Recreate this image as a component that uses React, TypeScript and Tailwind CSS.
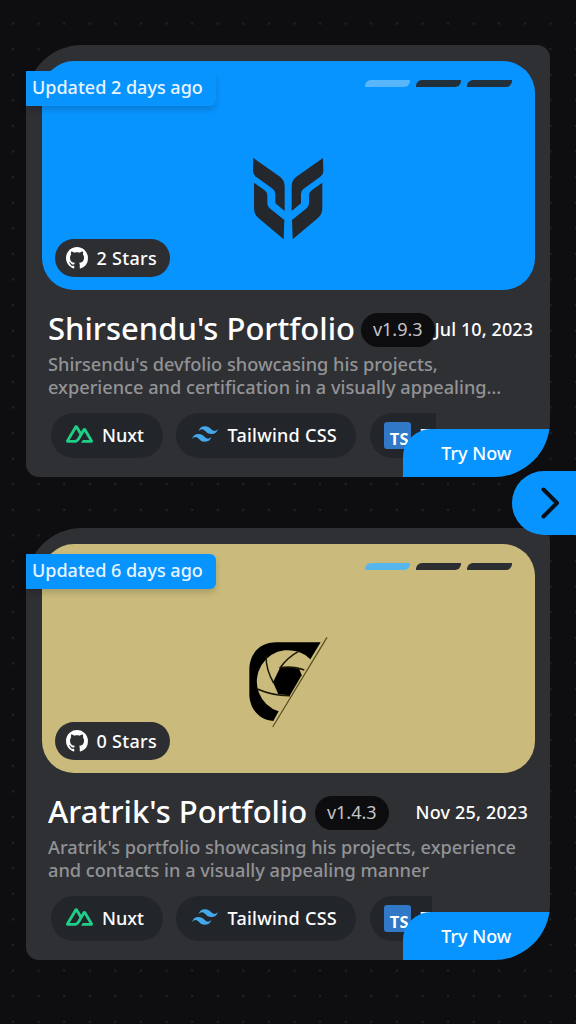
import React from "react";

function GithubIcon() {
  return (
    <svg viewBox="0 0 16 16" className="h-[22px] w-[22px] shrink-0" fill="#fff">
      <path d="M8 0C3.58 0 0 3.58 0 8c0 3.54 2.29 6.53 5.47 7.59.4.07.55-.17.55-.38 0-.19-.01-.82-.01-1.49-2.01.37-2.53-.49-2.69-.94-.09-.23-.48-.94-.82-1.13-.28-.15-.68-.52-.01-.53.63-.01 1.08.58 1.23.82.72 1.21 1.87.87 2.33.66.07-.52.28-.87.51-1.07-1.78-.2-3.64-.89-3.64-3.95 0-.87.31-1.59.82-2.15-.08-.2-.36-1.02.08-2.12 0 0 .67-.21 2.2.82.64-.18 1.32-.27 2-.27s1.36.09 2 .27c1.53-1.04 2.2-.82 2.2-.82.44 1.1.16 1.92.08 2.12.51.56.82 1.27.82 2.15 0 3.07-1.87 3.75-3.65 3.95.29.25.54.73.54 1.48 0 1.07-.01 1.93-.01 2.2 0 .21.15.46.55.38A8.01 8.01 0 0 0 16 8c0-4.42-3.58-8-8-8z" />
    </svg>
  );
}

function NuxtIcon() {
  return (
    <svg viewBox="0 4.1 24 15.8" className="-mt-[3px] h-[18px] w-[27px] shrink-0" fill="#1fcf88">
      <path d="M13.4642 19.8295h8.9218c.2834 0 .5618-.0723.8072-.2098a1.5899 1.5899 0 0 0 .5908-.5732 1.5293 1.5293 0 0 0 .216-.783 1.529 1.529 0 0 0-.2167-.7828L17.7916 7.4142a1.59 1.59 0 0 0-.5907-.573 1.6524 1.6524 0 0 0-.807-.2098c-.2833 0-.5616.0724-.807.2098a1.5904 1.5904 0 0 0-.5907.573L13.4642 9.99l-2.9954-5.0366a1.5913 1.5913 0 0 0-.591-.573 1.6533 1.6533 0 0 0-.8071-.2098c-.2834 0-.5617.0723-.8072.2097a1.5913 1.5913 0 0 0-.591.573L.2168 17.4808A1.5292 1.5292 0 0 0 0 18.2635c-.0001.2749.0744.545.216.783a1.59 1.59 0 0 0 .5908.5732c.2454.1375.5238.2098.8072.2098h5.6003c2.219 0 3.8554-.9454 4.9813-2.7899l2.7337-4.5922L16.3935 9.99l4.3944 7.382h-5.8586zm-6.341-2.4601l-3.9083-.0009 5.8586-9.8421 2.9232 4.921-1.9572 3.2897c-.7478 1.1967-1.5972 1.6323-2.9163 1.6323z" />
    </svg>
  );
}

function TailwindIcon() {
  return (
    <svg viewBox="0 4.8 24 14.4" className="-mt-[3px] h-4 w-[26px] shrink-0" fill="#44a8ec">
      <path d="M12 4.8c-3.2 0-5.2 1.6-6 4.8 1.2-1.6 2.6-2.2 4.2-1.8.913.228 1.565.89 2.288 1.624C13.666 10.618 15.027 12 18 12c3.2 0 5.2-1.6 6-4.8-1.2 1.6-2.6 2.2-4.2 1.8-.913-.228-1.565-.89-2.288-1.624C16.337 6.182 14.976 4.8 12 4.8zM6 12c-3.2 0-5.2 1.6-6 4.8 1.2-1.6 2.6-2.2 4.2-1.8.913.228 1.565.89 2.288 1.624C7.666 17.818 9.027 19.2 12 19.2c3.2 0 5.2-1.6 6-4.8-1.2 1.6-2.6 2.2-4.2 1.8-.913-.228-1.565-.89-2.288-1.624C10.337 13.382 8.976 12 6 12z" />
    </svg>
  );
}

function WingMark() {
  const half = (
    <>
      <path d="M70 54L150 110Q164 121 164 138V213L136 190V162Q136 152 128 146L80 112Q69 104 69 94Z" />
      <path d="M72 128L104 151Q112 157 112 168V188Q112 200 122 207L163 240L161 298L86 235Q72 224 72 205Z" />
    </>
  );
  return (
    <svg viewBox="0 0 360 330" className="-ml-[1px] h-[110px] w-[120px]" fill="#24282d">
      <g>{half}</g>
      <g transform="translate(349 0) scale(-1 1)">{half}</g>
    </svg>
  );
}

function ShutterMark() {
  return (
    <svg viewBox="0 0 360 360" className="-mt-[3px] h-[120px] w-[120px]" fill="none">
      <path fill="#000" d="M272 67H140C85 67 58 105 58 150V225C60 270 90 300 130 303L146 274A94 94 0 1 1 241 118Z" />
      <path fill="#000" d="M150 143Q180 137 208 147L215 166L180 226L145 223L129 187Z" />
      <path stroke="#1c1806" strokeWidth="4.5" d="M108 108Q108 150 131 189M206 94Q172 112 150 144M148 143Q190 136 223 150M82 207Q130 228 180 227" />
      <path stroke="#57491c" strokeWidth="3.5" d="M291 52L128 321" />
    </svg>
  );
}

const tagPill = "flex h-[45px] shrink-0 items-center rounded-full bg-[#22262a]";

type Project = {
  updated: string;
  cover: string;
  bars: string[];
  mark: React.ReactNode;
  stars: string;
  title: string;
  titleClass: string;
  version: string;
  date: string;
  dateClass: string;
  lines: string[];
  tagsClass: string;
};

const projects: Project[] = [
  {
    updated: "Updated 2 days ago",
    cover: "bg-[#0894ff]",
    bars: ["bg-[#58b6fc]", "bg-[#22303c]", "bg-[#22303c]"],
    mark: <WingMark />,
    stars: "2 Stars",
    title: "Shirsendu's Portfolio",
    titleClass: "w-[313px]",
    version: "v1.9.3",
    date: "Jul 10, 2023",
    dateClass: "tracking-[0.1px]",
    lines: [
      "Shirsendu's devfolio showcasing his projects,",
      "experience and certification in a visually appealing…",
    ],
    tagsClass: "w-[385px]",
  },
  {
    updated: "Updated 6 days ago",
    cover: "bg-[#cabb7c]",
    bars: ["bg-[#58b6ee]", "bg-[#2c2e31]", "bg-[#2c2e31]"],
    mark: <ShutterMark />,
    stars: "0 Stars",
    title: "Aratrik's Portfolio",
    titleClass: "w-[267px]",
    version: "v1.4.3",
    date: "Nov 25, 2023",
    dateClass: "ml-[27px] tracking-[0.2px]",
    lines: [
      "Aratrik's portfolio showcasing his projects, experience",
      "and contacts in a visually appealing manner",
    ],
    tagsClass: "w-[381px]",
  },
];

function Card({ p }: { p: Project }) {
  return (
    <article className="relative h-[432px] w-[524px]">
      <div className="relative flex h-full flex-col overflow-hidden rounded-tl-[56px] rounded-tr-[13px] rounded-br-[56px] rounded-bl-[13px] bg-[#2f3034] px-4 pt-4">
        <div className={"relative flex h-[229px] w-[492.5px] shrink-0 justify-center rounded-[32px] " + p.cover}>
          <div className="ml-[4px] pt-[79px]">{p.mark}</div>
          <div className="absolute top-[19px] right-[22.5px] flex gap-[6.4px]">
            {p.bars.map((b, i) => (
              <span key={i} className={"h-[7px] w-[44.8px] rounded-tl-[6px] rounded-br-[6px] " + b} />
            ))}
          </div>
          <div className="absolute bottom-[13px] left-[12.5px] flex h-[38px] w-[115.5px] items-center gap-[9px] rounded-full bg-[#2d2e32] pl-[11px] text-[18px] tracking-[0.3px] text-white">
            <GithubIcon />
            <span>{p.stars}</span>
          </div>
        </div>
        <div className="mt-[22px] ml-[6px] flex h-[35px] w-[500px] shrink-0 items-center whitespace-nowrap text-white">
          <h2 className={"-mt-[3px] shrink-0 text-[31px] leading-[35px] " + p.titleClass}>{p.title}</h2>
          <span className="flex h-[34px] w-[73.5px] shrink-0 items-center justify-center rounded-full bg-[#0d0d10] text-[18px] font-normal text-[#c4c4c6]">{p.version}</span>
          <span className={"-mt-px text-[18px] " + p.dateClass}>{p.date}</span>
        </div>
        <div className="mt-[6px] ml-[6px] h-[45px] shrink-0 text-[18.2px] leading-[22.5px] whitespace-nowrap text-[#929396]">
          {p.lines.map((l) => (
            <p key={l}>{l}</p>
          ))}
        </div>
        <div className={"mt-[15px] ml-[9px] flex h-[45px] shrink-0 gap-[13.5px] overflow-hidden text-[18px] whitespace-nowrap text-white " + p.tagsClass}>
          <div className={tagPill + " w-[111.5px] gap-[9px] pl-[15px]"}>
            <NuxtIcon />
            <span>Nuxt</span>
          </div>
          <div className={tagPill + " w-[180px] gap-[10px] pl-[15.5px]"}>
            <TailwindIcon />
            <span className="tracking-[0.25px]">Tailwind CSS</span>
          </div>
          <div className={tagPill + " w-[160px] gap-[10px] pl-[14px]"}>
            <span className="flex h-[27px] w-[27px] items-end justify-end rounded-[3px] bg-[#3178c6] pr-[2px] font-['Open_Sans',sans-serif] text-[16.5px] leading-[21px] font-bold">TS</span>
            <span>TypeScript</span>
          </div>
        </div>
        <button className="absolute right-0 bottom-0 h-12 w-[147.5px] rounded-tl-[28px] bg-[#0894ff] text-[18px] font-medium text-white">Try Now</button>
      </div>
      <div className="absolute top-[26px] left-0 flex h-[35px] w-[190px] items-center rounded-r-[6px] bg-[#0894ff] pb-[3px] pl-[6px] text-[18px] whitespace-nowrap text-[#e8f5ff] shadow-[0_4px_6px_rgba(0,0,0,0.16)]">
        {p.updated}
      </div>
    </article>
  );
}

export default function App() {
  return (
    <main className="relative flex h-[1024px] w-[576px] flex-col gap-[51.4px] overflow-hidden bg-[#0e0e11] bg-[radial-gradient(circle,#222326_1px,transparent_1.6px)] bg-[length:25.6px_25.6px] bg-[position:0.2px_10.8px] pt-[45px] pl-[26px] font-['Noto_Sans',sans-serif] font-medium">
      {projects.map((p) => (
        <Card key={p.title} p={p} />
      ))}
      <button className="absolute top-[470.5px] right-0 h-16 w-16 rounded-l-[32px] bg-[#0894ff]">
        <svg viewBox="0 0 64 64" className="h-16 w-16" fill="none" stroke="#071018" strokeWidth="4" strokeLinecap="round" strokeLinejoin="round">
          <path d="M31.5 18.5L45 32L31.5 45.5" />
        </svg>
      </button>
    </main>
  );
}
